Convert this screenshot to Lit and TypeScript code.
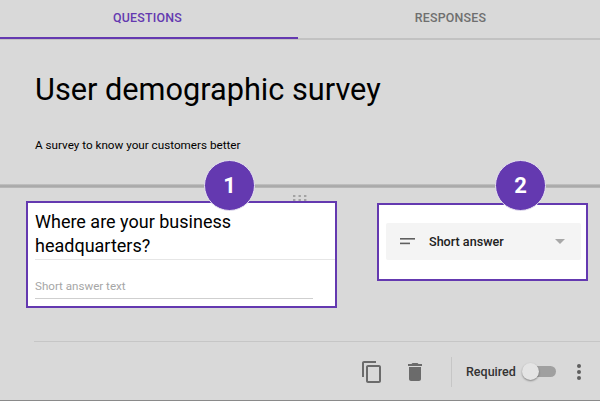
import { LitElement, css, html } from "lit";
import { customElement } from "lit/decorators.js";

@customElement("app-root")
export class AppRoot extends LitElement {
  render() {
    return html`
      <nav class="tabs">
        <div class="tab active">QUESTIONS</div>
        <div class="tab">RESPONSES</div>
      </nav>
      <header class="head">
        <h1>User demographic survey</h1>
        <p>A survey to know your customers better</p>
      </header>
      <main class="body">
        <section class="question">
          <div class="badge">1</div>
          <div class="drag">
            <svg width="14" height="6" viewBox="0 0 14 6" fill="#a3a3a3">
              <rect x="0" y="0" width="2.4" height="2"></rect><rect x="5.5" y="0" width="2.4" height="2"></rect><rect x="11" y="0" width="2.4" height="2"></rect>
              <rect x="0" y="4" width="2.4" height="2"></rect><rect x="5.5" y="4" width="2.4" height="2"></rect><rect x="11" y="4" width="2.4" height="2"></rect>
            </svg>
          </div>
          <h2>Where are your business headquarters?</h2>
          <div class="answer">Short answer text</div>
        </section>
        <section class="type">
          <div class="badge">2</div>
          <div class="select">
            <svg width="16" height="8" viewBox="0 0 16 8" fill="#5f5f5f">
              <rect x="0" y="0" width="15" height="1.6"></rect>
              <rect x="0" y="4.6" width="10" height="1.6"></rect>
            </svg>
            <span>Short answer</span>
            <i class="caret"></i>
          </div>
        </section>
      </main>
      <footer class="foot">
        <svg class="copy" width="24" height="24" viewBox="0 0 24 24" fill="#6b6b6b">
          <path d="M16 1H4c-1.100 0-2 .9-2 2v14h2V3h12V1zm3 4H8c-1.100 0-2 .9-2 2v14c0 1.100.9 2 2 2h11c1.100 0 2-.9 2-2V7c0-1.100-.9-2-2-2zm0 16H8V7h11v14z"></path>
        </svg>
        <svg class="trash" width="24" height="24" viewBox="0 0 24 24" fill="#6b6b6b">
          <path d="M6 19c0 1.100.9 2 2 2h8c1.100 0 2-.9 2-2V7H6v12zM19 4h-3.500l-1-1h-5l-1 1H5v2h14V4z"></path>
        </svg>
        <div class="sep"></div>
        <span class="req">Required</span>
        <div class="switch"><div class="knob"></div></div>
        <svg class="more" width="6" height="16" viewBox="0 0 6 16" fill="#5f5f5f">
          <circle cx="3" cy="2" r="2"></circle><circle cx="3" cy="8" r="2"></circle><circle cx="3" cy="14" r="2"></circle>
        </svg>
      </footer>
    `;
  }

  static styles = css`
    :host {
      display: block;
      position: relative;
      width: 600px;
      height: 401px;
      overflow: hidden;
      background: #d9d9d9;
      box-shadow: inset 0 -1px 0 #8a8a8a;
      font-family: Roboto, sans-serif;
      color: #000;
    }
    .tabs {
      display: flex;
      height: 38px;
      border-bottom: 2px solid #c2c2c2;
    }
    .tab {
      flex: 1;
      height: 38px;
      padding-left: 3px;
      line-height: 36px;
      text-align: center;
      font-size: 12.4px;
      font-weight: 500;
      letter-spacing: 0.2px;
      color: #6f6f6f;
    }
    .tab.active {
      flex: 0 0 295px;
      padding: 0 3px 0 0;
      color: #6439b0;
      height: 37px;
      border-bottom: 2px solid #6439b0;
    }
    .head {
      height: 145px;
      padding: 0 0 3px 35px;
      background: linear-gradient(#c6c6c6, #a4a4a4 50%, #bcbcbc) bottom / 100% 4px no-repeat;
    }
    h1 {
      margin: 0;
      padding-top: 30px;
      font-size: 30.7px;
      line-height: 40px;
      font-weight: 400;
    }
    .head p {
      margin: 0;
      padding-top: 27px;
      font-size: 11.7px;
      line-height: 16px;
    }
    .body {
      display: flex;
      align-items: flex-start;
      height: 153px;
      padding-left: 26px;
    }
    .question,
    .type {
      position: relative;
      box-sizing: border-box;
      background: #fff;
      border: 2px solid #6439b0;
    }
    .question {
      width: 311px;
      height: 107px;
      margin-top: 13px;
    }
    .type {
      width: 211px;
      height: 78px;
      margin: 15px 0 0 40px;
      padding: 18px 5px 0 7px;
    }
    .badge {
      position: absolute;
      width: 51px;
      height: 51px;
      box-sizing: border-box;
      border: 1px solid #e6e2f0;
      border-radius: 50%;
      background: #6439b0;
      color: #fff;
      font-size: 22px;
      font-weight: 700;
      line-height: 49px;
      text-align: center;
    }
    .question .badge {
      top: -43px;
      left: 176px;
    }
    .type .badge {
      top: -45px;
      left: 116px;
    }
    .drag {
      position: absolute;
      top: -8px;
      left: 265px;
      line-height: 0;
    }
    h2 {
      margin: 0 0 0 7px;
      padding: 7px 40px 0 0;
      height: 49px;
      font-size: 18px;
      line-height: 24px;
      font-weight: 400;
      border-bottom: 1px solid #e6e6e6;
    }
    .answer {
      width: 278px;
      box-sizing: border-box;
      margin: 18px 0 0 7px;
      height: 21px;
      font-size: 11.6px;
      line-height: 17px;
      color: #a6a6a6;
      border-bottom: 1px solid #cfcfcf;
    }
    .select {
      display: flex;
      align-items: center;
      height: 37px;
      padding: 0 16px 0 14px;
      border-radius: 2px;
      background: #f4f4f4;
      font-size: 12.6px;
      font-weight: 500;
      color: #212121;
    }
    .select span {
      flex: 1;
      margin-left: 13px;
    }
    .caret {
      width: 0;
      height: 0;
      border-left: 5px solid transparent;
      border-right: 5px solid transparent;
      border-top: 5px solid #a8a8a8;
    }
    .foot {
      display: flex;
      align-items: center;
      height: 59px;
      margin-left: 34px;
      border-top: 1px solid #c6c6c6;
      color: #333;
    }
    .copy {
      margin-left: 326px;
    }
    .trash {
      margin-left: 19px;
    }
    .sep {
      width: 1px;
      height: 30px;
      margin-left: 24px;
      background: #c6c6c6;
    }
    .req {
      margin: 0 0 0 14px;
      font-size: 12.5px;
      font-weight: 500;
    }
    .switch {
      position: relative;
      width: 33px;
      height: 11px;
      margin-left: 7px;
      border-radius: 6px;
      background: #a0a0a0;
    }
    .knob {
      position: absolute;
      top: -3px;
      left: -1px;
      width: 17px;
      height: 17px;
      border-radius: 50%;
      background: #e4e4e4;
      box-shadow: 0 1px 2px rgba(0, 0, 0, 0.4);
    }
    .more {
      margin-left: 20px;
    }
  `;
}
